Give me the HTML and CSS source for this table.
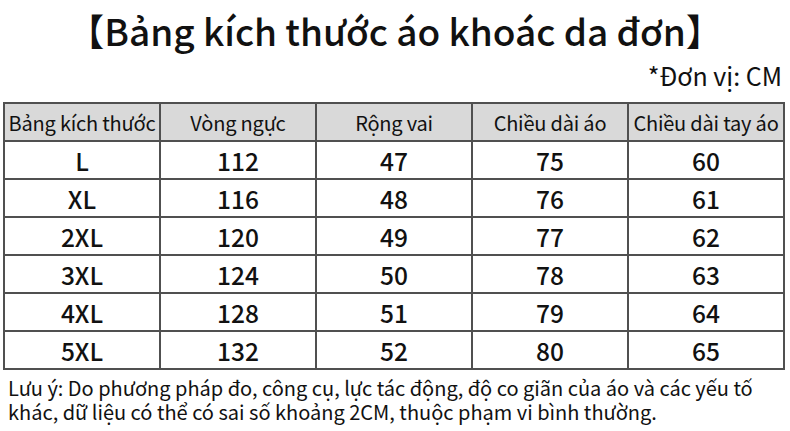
FILE: index.html
```html
<!DOCTYPE html>
<html lang="vi">
<head>
<meta charset="utf-8">
<link rel="stylesheet" href="styles.css">
</head>
<body>
<div class="page">
  <h1 class="title">【Bảng kích thước áo khoác da đơn】</h1>
  <div class="unit">*Đơn vị: CM</div>
  <table class="size-table">
    <thead>
      <tr><th>Bảng kích thước</th><th>Vòng ngực</th><th>Rộng vai</th><th>Chiều dài áo</th><th>Chiều dài tay áo</th></tr>
    </thead>
    <tbody>
      <tr><td>L</td><td>112</td><td>47</td><td>75</td><td>60</td></tr>
      <tr><td>XL</td><td>116</td><td>48</td><td>76</td><td>61</td></tr>
      <tr><td>2XL</td><td>120</td><td>49</td><td>77</td><td>62</td></tr>
      <tr><td>3XL</td><td>124</td><td>50</td><td>78</td><td>63</td></tr>
      <tr><td>4XL</td><td>128</td><td>51</td><td>79</td><td>64</td></tr>
      <tr><td>5XL</td><td>132</td><td>52</td><td>80</td><td>65</td></tr>
    </tbody>
  </table>
  <p class="note">Lưu ý: Do phương pháp đo, công cụ, lực tác động, độ co giãn của áo và các yếu tố khác, dữ liệu có thể có sai số khoảng 2CM, thuộc phạm vi bình thường.</p>
</div>
</body>
</html>
```

FILE: styles.css
```css
html, body {
  margin: 0;
  padding: 0;
  background: #ffffff;
}
body {
  font-family: "Noto Sans CJK SC", "Noto Sans", sans-serif;
  color: #111;
}
.page {
  width: 790px;
  height: 431px;
  overflow: hidden;
  display: flex;
  flex-direction: column;
}
.title {
  margin: 5px 0 0 0;
  font-size: 37px;
  line-height: 50px;
  font-weight: 500;
  text-align: center;
}
.unit {
  margin: 5px 8px 0 0;
  text-align: right;
  font-size: 25px;
  line-height: 30px;
}
.size-table {
  margin: 12px 0 0 3px;
  width: 782px;
  border-collapse: collapse;
  table-layout: fixed;
}
.size-table th, .size-table td {
  border: 2px solid #505050;
  text-align: center;
  padding: 0;
  height: 36px;
}
.size-table th {
  background: #d9d9d9;
  font-weight: 400;
  font-size: 20px;
  letter-spacing: -0.2px;
  white-space: nowrap;
}
.size-table td {
  font-size: 24.5px;
  font-weight: 500;
}
.note {
  margin: 6px 0 0 8px;
  width: 760px;
  font-size: 20px;
  line-height: 24px;
}
```
